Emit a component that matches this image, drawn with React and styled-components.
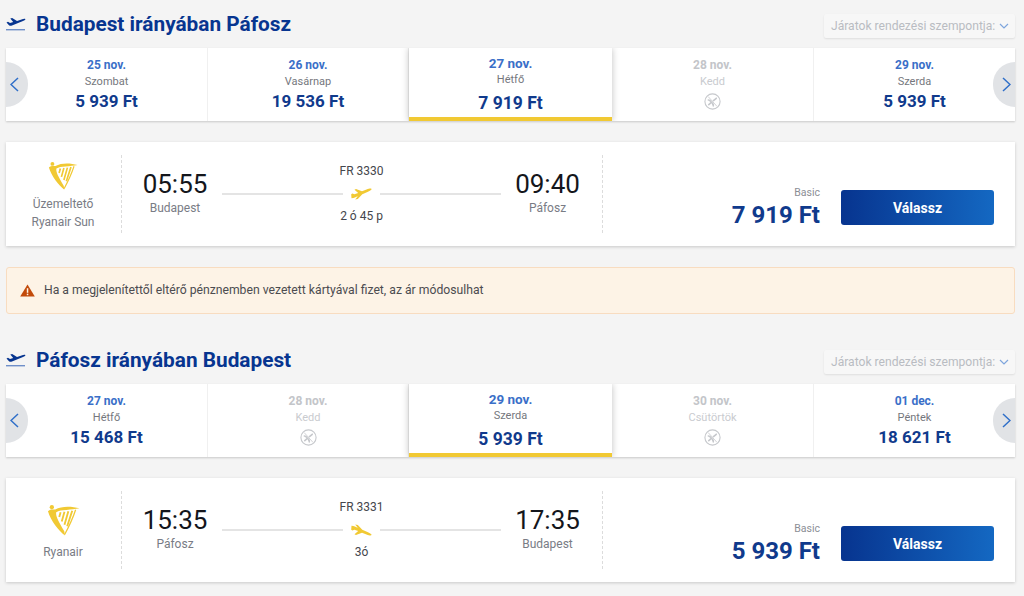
import styled, { createGlobalStyle } from "styled-components";

const GlobalStyle = createGlobalStyle`
  html, body { margin: 0; padding: 0; background: #f4f4f4; }
  body { font-family: Roboto, "Liberation Sans", sans-serif; overflow: hidden; }
`;

const Page = styled.div`
  width: 1024px;
  height: 596px;
  padding: 9px 9px 0 6px;
  box-sizing: border-box;
  overflow: hidden;
`;

const Section = styled.section`
  display: flex;
  flex-direction: column;
`;

const Header = styled.header`
  display: flex;
  align-items: center;
  height: 29px;
  margin-bottom: 10px;
`;

const Title = styled.h2`
  flex: 1;
  margin: 0 0 0 10px;
  font-size: 20.8px;
  line-height: 28px;
  font-weight: 700;
  color: #073590;
`;

const SortBox = styled.div`
  display: flex;
  align-items: center;
  justify-content: space-between;
  width: 191px;
  height: 24px;
  margin-top: 5px;
  padding: 0 6px 0 7px;
  box-sizing: border-box;
  background: #f7f7f7;
  border-radius: 2px;
  box-shadow: 0 1px 2px rgba(0, 0, 0, 0.09);
  font-size: 12.1px;
  color: #b9bcc2;
  white-space: nowrap;
`;

const Strip = styled.div`
  position: relative;
  display: grid;
  grid-template-columns: 202px 201px 203px 202px 201px;
  height: 73px;
  background: #fff;
  box-shadow: 0 1px 2px rgba(0, 0, 0, 0.18);
`;

const DayCell = styled.div`
  position: relative;
  display: flex;
  flex-direction: column;
  align-items: center;
  padding-top: ${(p) => (p.$selected ? "8px" : "10px")};
  box-sizing: border-box;
  border-right: ${(p) => (p.$last || p.$selected ? "none" : "1px solid #f0f0f0")};
  ${(p) =>
    p.$selected &&
    `
    background: #fff;
    border-bottom: 4px solid #f1c933;
    box-shadow: 0 0 7px rgba(0, 0, 0, 0.25);
    clip-path: inset(0 -10px 0 -10px);
    z-index: 1;
  `}
`;

const DayDate = styled.div`
  font-size: ${(p) => (p.$selected ? "13.5px" : "12px")};
  line-height: 15px;
  font-weight: 700;
  color: ${(p) => (p.$off ? "#c3c5c9" : "#3a6fc8")};
`;

const DayName = styled.div`
  margin-top: 1px;
  font-size: 11px;
  line-height: 15px;
  color: ${(p) => (p.$off ? "#c9cbcf" : "#75777d")};
`;

const DayPrice = styled.div`
  margin-top: ${(p) => (p.$selected ? "5px" : "1px")};
  font-size: ${(p) => (p.$selected ? "17.5px" : "17px")};
  line-height: 22px;
  font-weight: 700;
  color: #103a8c;
`;

const NoFlight = styled.div`
  display: flex;
  margin-top: 4px;
`;

const NavButton = styled.div`
  position: absolute;
  top: 14px;
  ${(p) => (p.$right ? "right: 0; padding-left: 5px;" : "left: 0; padding-right: 6px;")}
  z-index: 2;
  display: flex;
  align-items: center;
  justify-content: center;
  width: 22px;
  height: 45px;
  box-sizing: border-box;
  background: #e1e3e6;
  border-radius: ${(p) => (p.$right ? "23px 0 0 23px" : "0 23px 23px 0")};
`;

const FlightCard = styled.div`
  display: flex;
  align-items: center;
  height: 104px;
  margin-top: 21px;
  background: #fff;
  box-shadow: 0 1px 3px rgba(0, 0, 0, 0.18);
`;

const Carrier = styled.div`
  display: flex;
  flex-direction: column;
  align-items: center;
  justify-content: center;
  width: 116px;
  height: 78px;
  padding: 4px 1px 0 0;
  box-sizing: border-box;
  border-right: 1px dashed #dcdcdc;
  font-size: 12px;
  line-height: 18px;
  color: #797c85;
`;

const CarrierLogo = styled.div`
  display: flex;
  margin-bottom: ${(p) => p.$gap}px;
`;

const Route = styled.div`
  display: grid;
  grid-template-columns: 94px 1fr 93px;
  align-items: center;
  width: 481px;
  height: 78px;
  padding: 0 8px 0 6px;
  box-sizing: border-box;
  border-right: 1px dashed #dcdcdc;
`;

const Stop = styled.div`
  display: flex;
  flex-direction: column;
  align-items: center;
  padding-top: 2px;
`;

const Clock = styled.div`
  font-size: 26px;
  line-height: 25px;
  color: #14161c;
`;

const City = styled.div`
  margin-top: 1px;
  font-size: 12px;
  line-height: 20px;
  color: #797c85;
`;

const Leg = styled.div`
  display: flex;
  flex-direction: column;
  align-items: center;
  margin-top: -1px;
  font-size: 12px;
  line-height: 16px;
  color: #44464c;
`;

const LegLine = styled.div`
  display: flex;
  align-items: center;
  gap: 8px;
  width: 100%;
  margin: 9px 0 8px;
  &::before,
  &::after {
    content: "";
    flex: 1;
    height: 2px;
    background: #e4e4e4;
  }
`;

const Fare = styled.div`
  flex: 1;
  align-self: flex-end;
  display: flex;
  align-items: flex-end;
  justify-content: flex-end;
  gap: 21px;
  padding: 0 21px 21px 0;
`;

const FarePrice = styled.div`
  display: flex;
  flex-direction: column;
  align-items: flex-end;
  margin-bottom: -5px;
`;

const FareName = styled.div`
  font-size: 10.5px;
  line-height: 14px;
  color: #8b8e95;
`;

const FareAmount = styled.div`
  font-size: 24px;
  line-height: 30px;
  font-weight: 700;
  color: #103a8c;
`;

const SelectButton = styled.button`
  width: 153px;
  height: 35px;
  padding: 0;
  border: none;
  border-radius: 3px;
  background: linear-gradient(90deg, #07348f, #1468c2);
  color: #fff;
  font-family: inherit;
  font-size: 14px;
  font-weight: 700;
`;

const Notice = styled.div`
  display: flex;
  align-items: center;
  gap: 9px;
  height: 47px;
  margin: 21px 0 31px;
  padding: 0 0 1px 13px;
  box-sizing: border-box;
  background: #fdf3e6;
  border: 1px solid #f8dcc0;
  border-radius: 3px;
  font-size: 12.2px;
  color: #4c4c50;
`;

function DepartureIcon() {
  return (
    <svg width="20" height="15" viewBox="0 0 20 15" fill="#073590">
      <path d="M0.5 6.4 L2 5.7 L4 7 L7.2 5.9 L4.3 2.6 L6.2 2 L11 5 L15.5 3.4 C17 2.9 18.6 2.5 19.3 3 C19.8 3.6 18.6 4.3 17 5 L6 9.6 C4.8 10 3.9 10 3 9.3 Z" />
      <rect x="0" y="13" width="19" height="1.4" fill="#6f8fc9" />
    </svg>
  );
}

function ChevronDown() {
  return (
    <svg width="10" height="6" viewBox="0 0 10 6" fill="none" stroke="#7fa6dd" strokeWidth="1.2">
      <path d="M1 1 L5 5 L9 1" />
    </svg>
  );
}

function NavChevron({ right }) {
  return (
    <svg width="9" height="15" viewBox="0 0 9 15" fill="none" stroke="#2f6fc9" strokeWidth="1.5">
      <path d={right ? "M1 1 L8 7.5 L1 14" : "M8 1 L1 7.5 L8 14"} />
    </svg>
  );
}

function NoFlightIcon() {
  return (
    <svg width="17" height="17" viewBox="0 0 17 17" fill="none">
      <circle cx="8.5" cy="8.5" r="7.6" stroke="#c6c8cc" strokeWidth="1.1" />
      <g transform="rotate(-40 8.5 8.5)" fill="#c6c8cc">
        <path d="M3 7.7 H6.6 L5.4 4 H6.8 L9.4 7.7 H13 C14 7.7 14.3 8.2 14.3 8.5 C14.3 8.8 14 9.3 13 9.3 H9.4 L6.8 13 H5.4 L6.6 9.3 H3 Z" />
      </g>
      <path d="M5 4.4 L12.4 12.6" stroke="#fff" strokeWidth="1.4" />
      <path d="M4.2 3.6 L13 13.4" stroke="#c6c8cc" strokeWidth="0.8" />
    </svg>
  );
}

function PlaneIcon({ landing }) {
  return (
    <svg width="21" height="12" viewBox="0 0 21 12" fill="#f1c933" style={landing ? { transform: "scaleY(-1)" } : undefined}>
      <path d="M0.5 10.2 C3 9.8 5 9 6.8 8.2 L4.2 11.4 L6.8 11 L11.3 6.3 L17 3.7 C19 2.7 20.8 1.9 20.5 1 C20 0.2 18 0.7 15.5 1.6 L11 3.3 L5 1 L3.5 1.8 L7.2 5 L3.4 6.3 L1.4 5.6 L0.2 6.2 Z" />
    </svg>
  );
}

function HarpLogo({ size }) {
  return (
    <svg width={size} height={size} viewBox="0 0 34 33" fill="none">
      <circle cx="5" cy="2.8" r="2.2" fill="#f1c933" />
      <path d="M1 7 C3 4.6 6 5 8.5 5.2 C15 1.4 25 1.6 33.5 4 C29 4.6 25 5.3 20 5.6 C15.5 5.8 12 6.3 9.5 8 C8.8 12 11.5 17 17.8 27.5 L18.5 32 C12 27 4 17 1 7 Z" fill="#f1c933" />
      <path d="M29.5 5.4 C27 13 23 22 18.2 31" stroke="#f1c933" strokeWidth="1.3" />
      <path d="M14 8 L12.6 13 M18 7.4 L15.2 17.5 M22 7 L18 21 M26 6.4 L20.8 22.5" stroke="#f1c933" strokeWidth="1.9" />
    </svg>
  );
}

function WarningIcon() {
  return (
    <svg width="15" height="13" viewBox="0 0 15 13">
      <path d="M7.5 0.4 L14.8 12.6 L0.2 12.6 Z" fill="#c24a0a" />
      <rect x="6.8" y="4.2" width="1.5" height="4.6" fill="#fdf3e6" />
      <rect x="6.8" y="9.7" width="1.5" height="1.5" fill="#fdf3e6" />
    </svg>
  );
}

const outbound = {
  title: "Budapest irányában Páfosz",
  days: [
    { date: "25 nov.", name: "Szombat", price: "5 939 Ft" },
    { date: "26 nov.", name: "Vasárnap", price: "19 536 Ft" },
    { date: "27 nov.", name: "Hétfő", price: "7 919 Ft", selected: true },
    { date: "28 nov.", name: "Kedd" },
    { date: "29 nov.", name: "Szerda", price: "5 939 Ft" },
  ],
  carrier: ["Üzemeltető", "Ryanair Sun"],
  logoSize: 30,
  logoGap: 4,
  from: "Budapest",
  to: "Páfosz",
  departs: "05:55",
  arrives: "09:40",
  number: "FR 3330",
  duration: "2 ó 45 p",
  fare: "7 919 Ft",
};

const inbound = {
  title: "Páfosz irányában Budapest",
  days: [
    { date: "27 nov.", name: "Hétfő", price: "15 468 Ft" },
    { date: "28 nov.", name: "Kedd" },
    { date: "29 nov.", name: "Szerda", price: "5 939 Ft", selected: true },
    { date: "30 nov.", name: "Csütörtök" },
    { date: "01 dec.", name: "Péntek", price: "18 621 Ft" },
  ],
  carrier: ["Ryanair"],
  logoSize: 33,
  logoGap: 6,
  from: "Páfosz",
  to: "Budapest",
  departs: "15:35",
  arrives: "17:35",
  number: "FR 3331",
  duration: "3ó",
  fare: "5 939 Ft",
  landing: true,
};

function FlightSection({ data }) {
  return (
    <Section>
      <Header>
        <DepartureIcon />
        <Title>{data.title}</Title>
        <SortBox>
          Járatok rendezési szempontja:
          <ChevronDown />
        </SortBox>
      </Header>
      <Strip>
        <NavButton>
          <NavChevron />
        </NavButton>
        {data.days.map((day, i) => (
          <DayCell key={day.date} $selected={day.selected} $last={i === 4}>
            <DayDate $off={!day.price} $selected={day.selected}>{day.date}</DayDate>
            <DayName $off={!day.price}>{day.name}</DayName>
            {day.price ? (
              <DayPrice $selected={day.selected}>{day.price}</DayPrice>
            ) : (
              <NoFlight>
                <NoFlightIcon />
              </NoFlight>
            )}
          </DayCell>
        ))}
        <NavButton $right>
          <NavChevron right />
        </NavButton>
      </Strip>
      <FlightCard>
        <Carrier>
          <CarrierLogo $gap={data.logoGap}>
            <HarpLogo size={data.logoSize} />
          </CarrierLogo>
          {data.carrier.map((line) => (
            <div key={line}>{line}</div>
          ))}
        </Carrier>
        <Route>
          <Stop>
            <Clock>{data.departs}</Clock>
            <City>{data.from}</City>
          </Stop>
          <Leg>
            {data.number}
            <LegLine>
              <PlaneIcon landing={data.landing} />
            </LegLine>
            {data.duration}
          </Leg>
          <Stop>
            <Clock>{data.arrives}</Clock>
            <City>{data.to}</City>
          </Stop>
        </Route>
        <Fare>
          <FarePrice>
            <FareName>Basic</FareName>
            <FareAmount>{data.fare}</FareAmount>
          </FarePrice>
          <SelectButton>Válassz</SelectButton>
        </Fare>
      </FlightCard>
    </Section>
  );
}

export default function App() {
  return (
    <Page>
      <GlobalStyle />
      <FlightSection data={outbound} />
      <Notice>
        <WarningIcon />
        Ha a megjelenítettől eltérő pénznemben vezetett kártyával fizet, az ár módosulhat
      </Notice>
      <FlightSection data={inbound} />
    </Page>
  );
}
